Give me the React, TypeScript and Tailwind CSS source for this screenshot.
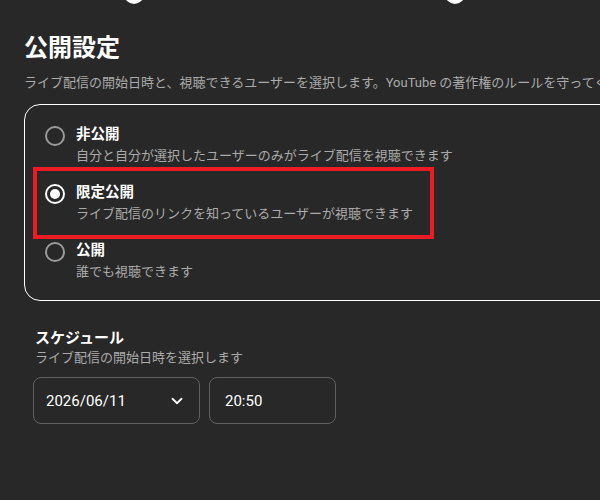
import React from 'react';

const options = [
  { label: '非公開', desc: '自分と自分が選択したユーザーのみがライブ配信を視聴できます' },
  { label: '限定公開', desc: 'ライブ配信のリンクを知っているユーザーが視聴できます' },
  { label: '公開', desc: '誰でも視聴できます' },
];

function Radio({ checked }: { checked: boolean }) {
  return (
    <span
      className={
        checked
          ? 'flex h-[20px] w-[20px] shrink-0 items-center justify-center rounded-full border-2 border-white'
          : 'flex h-[20px] w-[20px] shrink-0 items-center justify-center rounded-full border-2 border-[#9a9a9a]'
      }
    >
      {checked && <span className="h-[10px] w-[10px] rounded-full bg-white" />}
    </span>
  );
}

export default function App() {
  const selected = 1;
  return (
    <div
      className="relative h-[500px] w-[600px] overflow-hidden bg-[#282828] text-white"
      style={{ fontFamily: 'Roboto, "Noto Sans CJK JP", sans-serif' }}
    >
      {/* stepper dots cut off at top */}
      <div className="flex h-[4px] overflow-hidden">
        <span className="-mt-[16px] ml-[124px] h-[20px] w-[20px] rounded-full bg-white" />
        <span className="-mt-[16px] ml-[301px] h-[20px] w-[20px] rounded-full bg-white" />
      </div>

      <div className="pl-[24px] pt-[28px]">
        <h1 className="whitespace-nowrap text-[24px] font-bold leading-[32px]">公開設定</h1>
        <p className="mt-[10px] whitespace-nowrap text-[13px] leading-[18px] text-[#aaaaaa]">
          ライブ配信の開始日時と、視聴できるユーザーを選択します。YouTube の著作権のルールを守ってください。
        </p>

        <div className="mt-[12px] w-[620px] rounded-[16px] border border-white pb-[19px] pl-[20px] pt-[20px]">
          <div className="flex flex-col gap-[18px]">
            {options.map((o, i) => (
              <div key={o.label} className="flex gap-[11px]">
                <div className="pt-[1px]">
                  <Radio checked={i === selected} />
                </div>
                <div className="flex flex-col">
                  <span className="text-[14.5px] font-bold leading-[20px]">{o.label}</span>
                  <span className="mt-[2px] text-[13px] leading-[18px] text-[#aaaaaa]">{o.desc}</span>
                </div>
              </div>
            ))}
          </div>
        </div>
      </div>

      <div className="pl-[33px] pt-[26px]">
        <h2 className="pl-[2px] text-[15px] font-bold leading-[22px]">スケジュール</h2>
        <p className="pl-[2px] text-[13px] leading-[18px] text-[#aaaaaa]">ライブ配信の開始日時を選択します</p>
        <div className="mt-[10px] flex gap-[9px]">
          <div className="flex h-[47px] w-[167px] items-center justify-between rounded-[8px] border border-[#606060] pl-[12px] pr-[13px]">
            <span className="text-[15px] leading-[20px]">2026/06/11</span>
            <svg width="18" height="18" viewBox="0 0 24 24" fill="none" stroke="white" strokeWidth="2.4" strokeLinecap="round" strokeLinejoin="round">
              <path d="M6 9l6 6 6-6" />
            </svg>
          </div>
          <div className="flex h-[47px] w-[127px] items-center rounded-[8px] border border-[#606060] pl-[15px]">
            <span className="text-[15px] leading-[20px]">20:50</span>
          </div>
        </div>
      </div>

      {/* annotation highlight */}
      <div className="absolute left-[33px] top-[167px] h-[72px] w-[401px] border-4 border-[#ed1c24]" />
    </div>
  );
}
